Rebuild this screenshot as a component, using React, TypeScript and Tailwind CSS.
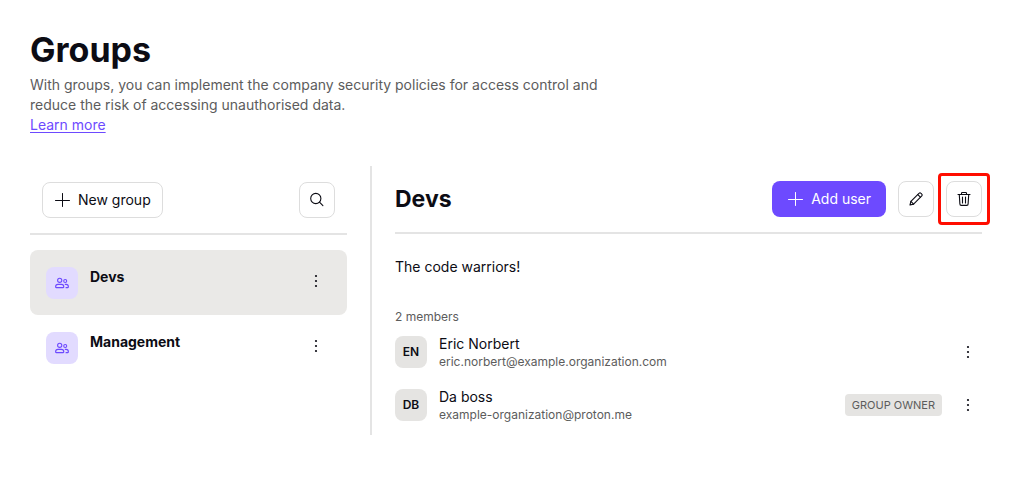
import { useState } from 'react'

const GROUPS = ['Devs', 'Management']

const MEMBERS = [
  { initials: 'EN', name: 'Eric Norbert', email: 'eric.norbert@example.organization.com', owner: false },
  { initials: 'DB', name: 'Da boss', email: 'example-organization@proton.me', owner: true },
]

function PlusIcon() {
  return (
    <svg className="size-4" viewBox="0 0 16 16" fill="none" stroke="currentColor" strokeWidth="1" strokeLinecap="round" aria-hidden="true">
      <path d="M8.5 1.5v13M1.5 8.5h14" />
    </svg>
  )
}

function SearchIcon() {
  return (
    <svg className="size-4" viewBox="0 0 16 16" fill="none" stroke="currentColor" strokeWidth="1.1" strokeLinecap="round" aria-hidden="true">
      <circle cx="6.8" cy="6.5" r="5.1" />
      <path d="M10.5 10.2l3.4 3.4" />
    </svg>
  )
}

function PencilIcon() {
  return (
    <svg className="size-4" viewBox="0 0 16 16" fill="none" stroke="currentColor" strokeWidth="1.1" strokeLinejoin="round" strokeLinecap="round" aria-hidden="true">
      <path d="M2 14l.9-3.6 8.3-8.2a1.1 1.1 0 0 1 1.6 0l1 1a1.1 1.1 0 0 1 0 1.6l-8.2 8.3z" />
      <path d="M9.8 3.6l2.6 2.6M2.9 10.4l2.7 2.7" />
    </svg>
  )
}

function TrashIcon() {
  return (
    <svg className="size-4" viewBox="0 0 16 16" fill="none" stroke="currentColor" strokeWidth="1.1" strokeLinejoin="round" strokeLinecap="round" aria-hidden="true">
      <path d="M2 3.5h12M5.5 3.5V2.3a.8.8 0 0 1 .8-.8h3.4a.8.8 0 0 1 .8.8v1.2" />
      <path d="M3.3 3.8l.6 9.3a1.3 1.3 0 0 0 1.3 1.3h5.6a1.3 1.3 0 0 0 1.3-1.3l.6-9.3M6.5 6v6M9.5 6v6" />
    </svg>
  )
}

function UsersIcon() {
  return (
    <svg className="size-4" viewBox="0 0 16 16" fill="none" stroke="currentColor" strokeWidth="1.1" strokeLinejoin="round" aria-hidden="true">
      <circle cx="5.7" cy="5.3" r="2.1" />
      <circle cx="11.2" cy="6" r="1.5" />
      <path d="M1.6 12c0-1.7 1-2.6 2.3-2.6h3.6c1.3 0 2.3.9 2.3 2.6 0 .4-.2.6-.6.6h-7c-.4 0-.6-.2-.6-.6z" />
      <path d="M10.8 9.4h1.3c1.4 0 2.3.9 2.3 2.6 0 .4-.2.6-.6.6h-2.2" />
    </svg>
  )
}

function DotsIcon() {
  return (
    <svg className="size-4" viewBox="0 0 16 16" fill="currentColor" aria-hidden="true">
      <circle cx="8" cy="3" r="1.1" />
      <circle cx="8" cy="8" r="1.1" />
      <circle cx="8" cy="13" r="1.1" />
    </svg>
  )
}

export default function App() {
  const [selected, setSelected] = useState('Devs')

  return (
    <main className="bg-white pl-[30px] pr-[42px] pt-7 pb-12 font-['Inter',sans-serif] text-sm text-[#0c0c14]">
      <h1 className="text-[34px] leading-[43px] font-bold">Groups</h1>
      <p className="mt-1 max-w-[580px] leading-5 text-[#5c5c5c]">
        With groups, you can implement the company security policies for access control and reduce the risk of accessing unauthorised data.
      </p>
      <a href="#learn-more" className="block w-fit leading-5 text-[#6d4aff] underline underline-offset-2">Learn more</a>

      <div className="mt-[31px] flex">
        {/* group list */}
        <aside className="w-[342px] shrink-0 border-r-2 border-[#e4e4e4] pr-[23px]">
          <div className="flex items-center justify-between border-b-2 border-[#e4e4e4] px-3 pt-4 pb-[15px]">
            <button className="flex h-9 items-center gap-2 rounded-lg border border-[#dddddd] px-[11px]">
              <PlusIcon />
              New group
            </button>
            <button aria-label="Search" className="flex size-9 items-center justify-center rounded-lg border border-[#dddddd]">
              <SearchIcon />
            </button>
          </div>
          <ul className="mt-[15px]">
            {GROUPS.map(g => (
              <li key={g} className={`flex h-[65px] items-start rounded-lg pt-[17px] pr-[23px] pl-4 ${g === selected ? 'bg-[#eae9e7]' : ''}`}>
                <button onClick={() => setSelected(g)} className="flex flex-1 items-start gap-3 text-left">
                  <span className="flex size-8 items-center justify-center rounded-lg bg-[#e2dbff] text-[#6d4aff]">
                    <UsersIcon />
                  </span>
                  <span className="leading-5 font-bold">{g}</span>
                </button>
                <button aria-label={`${g} options`} className="py-1.5">
                  <DotsIcon />
                </button>
              </li>
            ))}
          </ul>
        </aside>

        {/* selected group */}
        <section className="min-w-0 flex-1 pb-3 pl-[23px]">
          <div className="flex items-center border-b-2 border-[#e4e4e4] py-[15px]">
            <h2 className="flex-1 text-[23px] leading-8 font-bold">Devs</h2>
            <button className="mr-3 flex h-9 items-center gap-2 rounded-lg bg-[#6d4aff] px-[15px] text-white">
              <PlusIcon />
              Add user
            </button>
            <button aria-label="Edit group" className="mr-3 flex size-9 items-center justify-center rounded-lg border border-[#dddddd]">
              <PencilIcon />
            </button>
            <div className="relative">
              <button aria-label="Delete group" className="flex size-9 items-center justify-center rounded-lg border border-[#dddddd]">
                <TrashIcon />
              </button>
              <span className="pointer-events-none absolute -inset-2 rounded-sm border-3 border-[#ff0d00]" />
            </div>
          </div>

          <p className="mt-[23px] leading-5">The code warriors!</p>
          <p className="mt-[30px] text-xs leading-5 text-[#5c5c5c]">2 members</p>
          <ul className="mt-[7px] flex flex-col gap-[17px]">
            {MEMBERS.map(m => (
              <li key={m.email} className="flex items-center pr-[6px]">
                <span className="mr-3 flex size-8 items-center justify-center rounded-lg bg-[#e5e4e2] text-xs font-semibold">{m.initials}</span>
                <div className="flex-1">
                  <p className="leading-5">{m.name}</p>
                  <p className="text-xs leading-4 text-[#5c5c5c]">{m.email}</p>
                </div>
                {m.owner && (
                  <span className="mr-[18px] rounded bg-[#e5e4e2] px-[7px] text-[11px] leading-[22px] text-[#5c5c5c]">GROUP OWNER</span>
                )}
                <button aria-label={`${m.name} options`}>
                  <DotsIcon />
                </button>
              </li>
            ))}
          </ul>
        </section>
      </div>
    </main>
  )
}
